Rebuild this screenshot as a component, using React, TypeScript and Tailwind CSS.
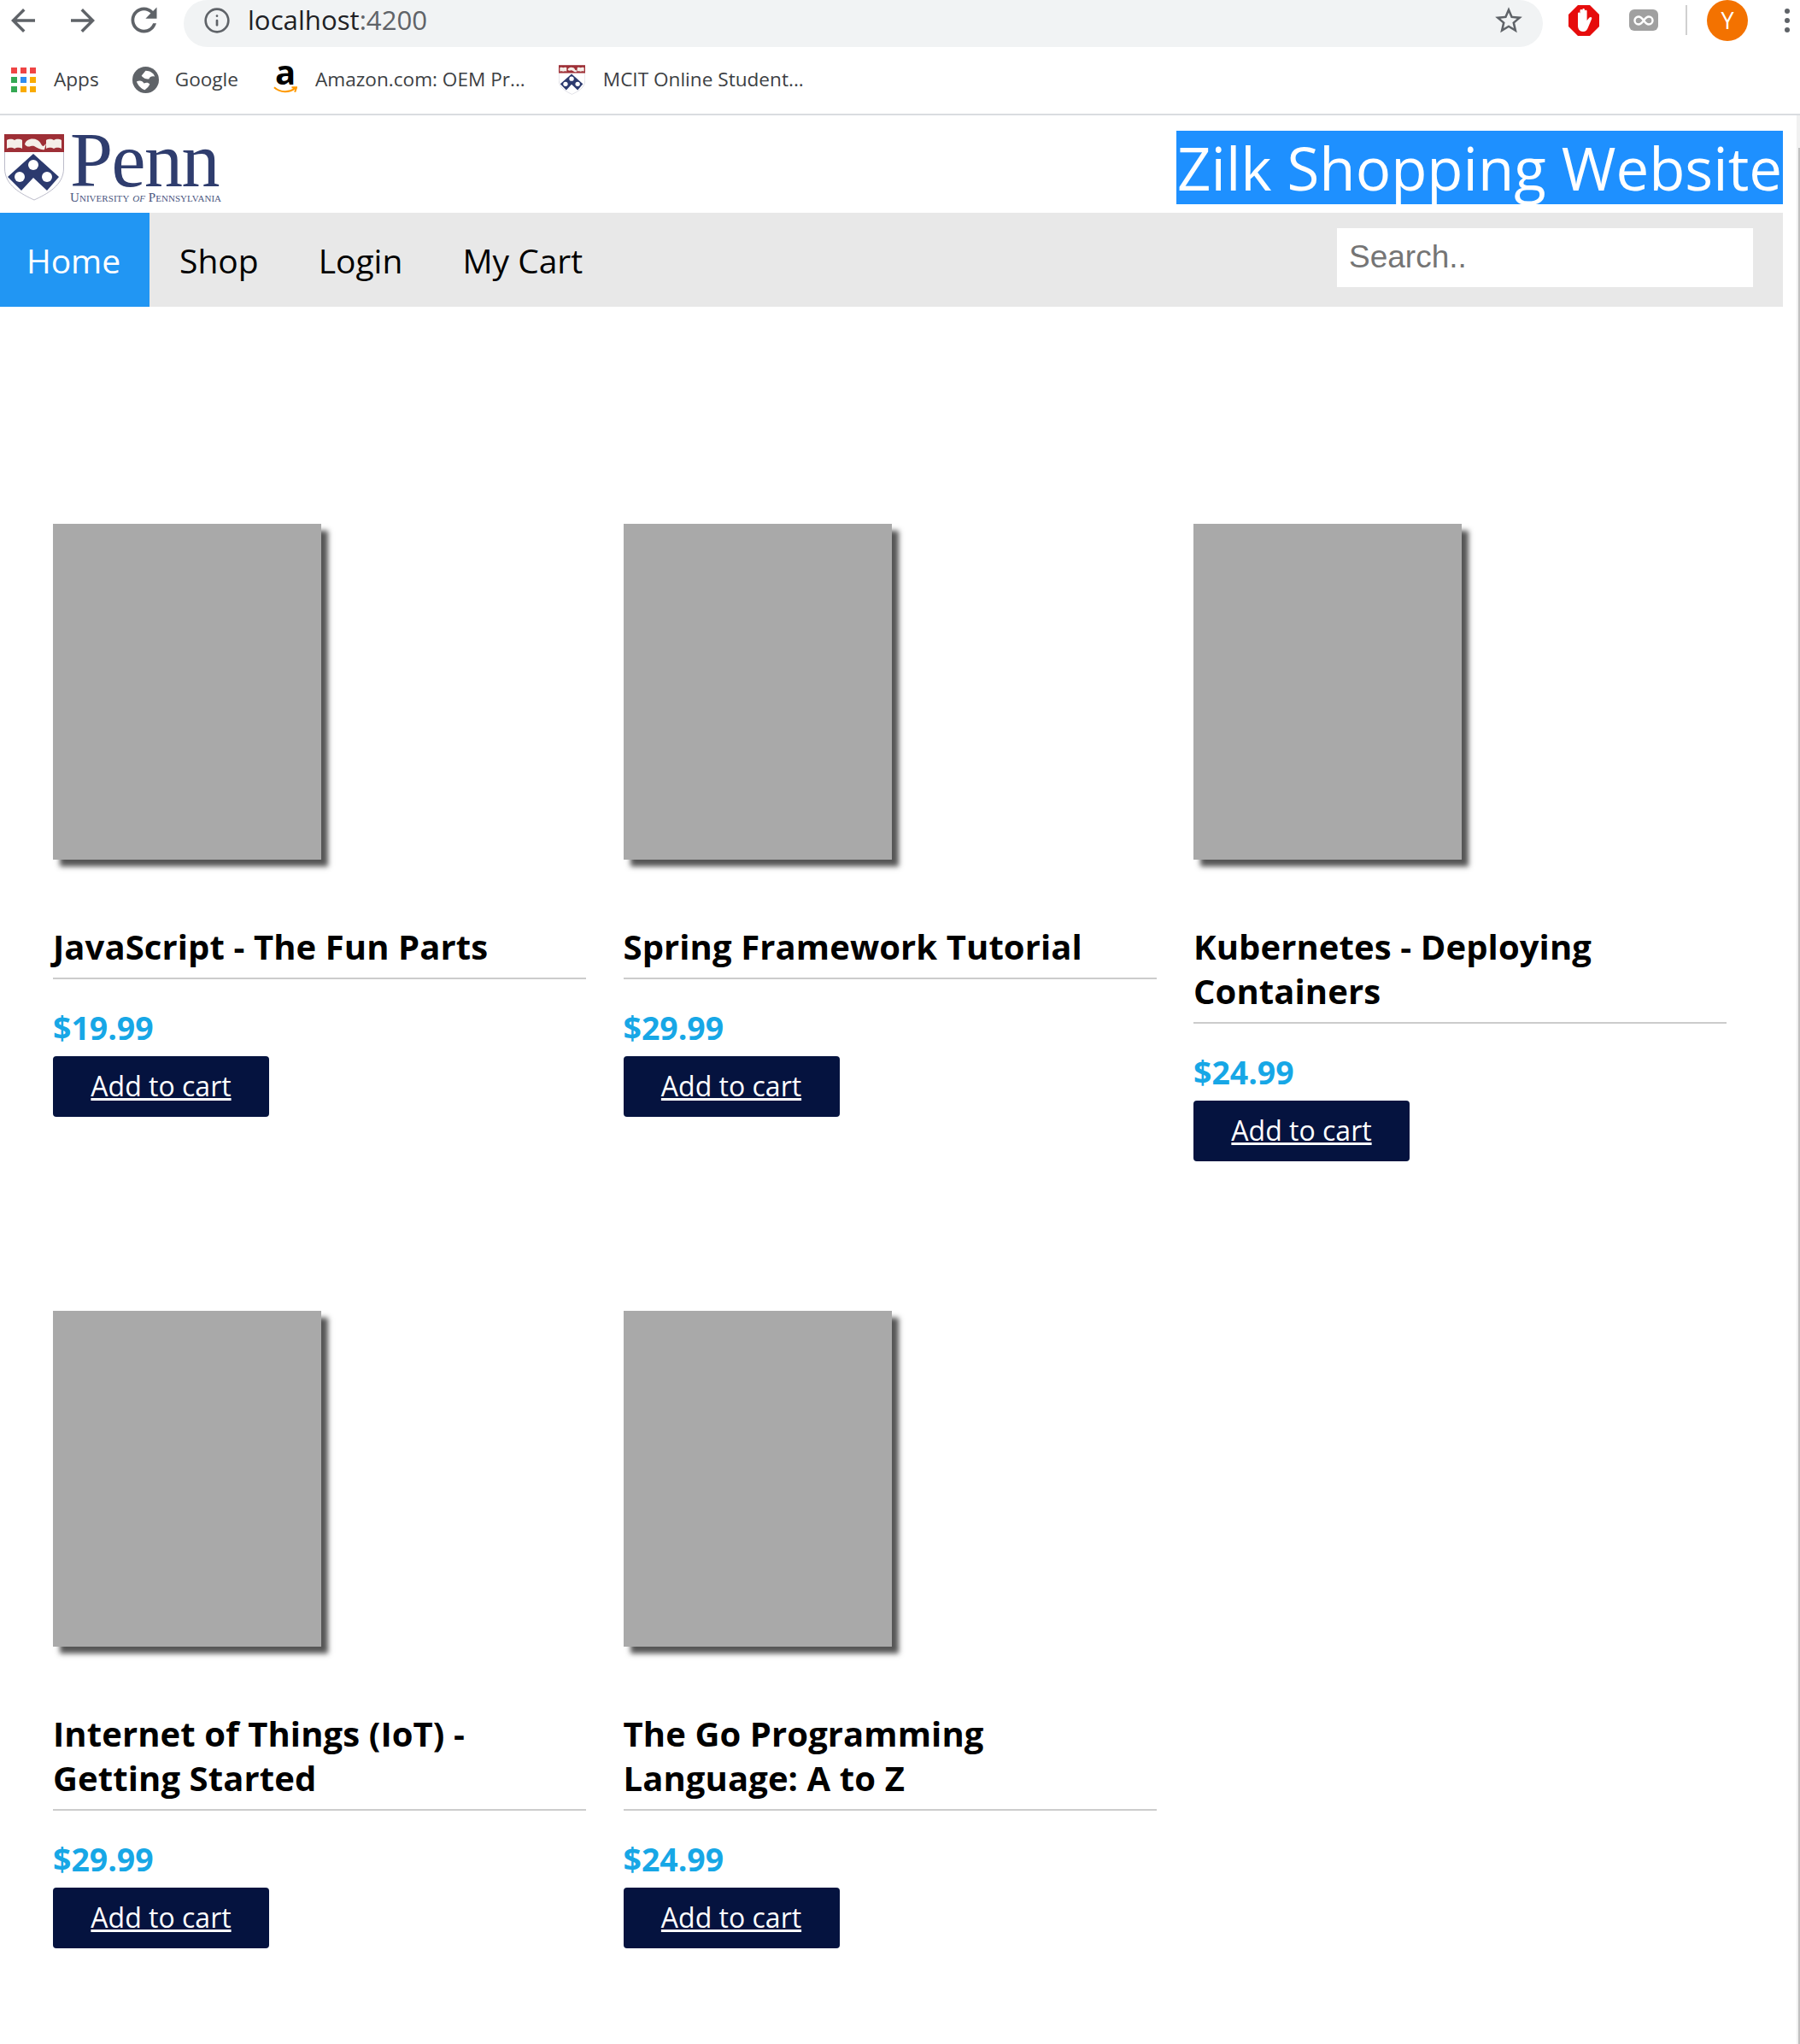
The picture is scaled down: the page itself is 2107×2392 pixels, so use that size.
import { Info } from "lucide-react";

type Product = { title: string[]; price: string };

const row1: Product[] = [
  { title: ["JavaScript - The Fun Parts"], price: "$19.99" },
  { title: ["Spring Framework Tutorial"], price: "$29.99" },
  { title: ["Kubernetes - Deploying", "Containers"], price: "$24.99" },
];

const row2: Product[] = [
  { title: ["Internet of Things (IoT) -", "Getting Started"], price: "$29.99" },
  { title: ["The Go Programming", "Language: A to Z"], price: "$24.99" },
];

const segoe = "font-['Open_Sans','Noto_Sans',sans-serif]";

// Penn shield, used big in the header and small in the bookmarks bar
function Shield({ className }: { className: string }) {
  return (
    <svg className={className} viewBox="0 0 70 78" aria-hidden="true">
      <path d="M0.5 0.5H69.5V40C69.5 60 50 70 35 77C20 70 0.5 60 0.5 40Z" fill="#fff" stroke="#aab" strokeWidth="0.8" />
      <path d="M0 0H70V21H0Z" fill="#9e2f36" />
      <path d="M3 7C7 5 10 6 12 7C14 6 17 5 21 7V17C17 15 14 16 12 17C10 16 7 15 3 17Z" fill="#f4eee8" />
      <path d="M49 7C53 5 56 6 58 7C60 6 63 5 67 7V17C63 15 60 16 58 17C56 16 53 15 49 17Z" fill="#f4eee8" />
      <path d="M24 12C25 6 33 4 39 7C43 9 43 14 46 14L49 11L47 18C43 19 39 16 35 14C31 13 28 17 24 12Z" fill="#f4eee8" />
      <path d="M34 23L64 50L50 66L34 51L20 66L4 50Z" fill="#2c3a6e" />
      <circle cx="34" cy="36" r="6" fill="#fff" />
      <circle cx="18" cy="50" r="6" fill="#fff" />
      <circle cx="50" cy="50" r="6" fill="#fff" />
    </svg>
  );
}

function ChromeIcon({ d, className }: { d: string; className: string }) {
  return (
    <svg className={className} viewBox="0 0 24 24" fill="#5f6368" aria-hidden="true">
      <path d={d} />
    </svg>
  );
}

function AppsGrid() {
  const colors = ["#ef4444", "#ef4444", "#ef4444", "#34a853", "#2f8cf0", "#f9ab00", "#34a853", "#f9ab00", "#f9ab00"];
  return (
    <div className="grid h-[29px] w-[29px] grid-cols-3 gap-[4px]">
      {colors.map((c, i) => (
        <span key={i} className="block" style={{ backgroundColor: c }} />
      ))}
    </div>
  );
}

function Bookmark({ icon, label, gap = "gap-[21px]" }: { icon: React.ReactNode; label: string; gap?: string }) {
  return (
    <div className={`flex items-center ${gap}`}>
      {icon}
      <span className="text-[22.6px] leading-none text-[#3c4043]">{label}</span>
    </div>
  );
}

function ProductCard({ product }: { product: Product }) {
  return (
    <div>
      <div className="h-[393px] w-[314px] bg-[#a9a9a9] shadow-[8px_8px_6px_#555]" />
      <h3 className="mt-[76px] border-b-2 border-[#ccc] pb-[10px] text-[40px] font-bold leading-[52px] tracking-[0.1px] text-black">
        {product.title.map((line) => (
          <div key={line}>{line}</div>
        ))}
      </h3>
      <p className="mt-[31px] text-[37.4px] font-bold leading-[52px] text-[#17a7e6]">{product.price}</p>
      <button className="mt-[7px] flex h-[71px] w-[253px] items-center justify-center rounded-[4px] bg-[#05133f] pb-[1px] text-[32px] text-white underline">
        Add to cart
      </button>
    </div>
  );
}

export default function App() {
  return (
    <div className={`h-[2392px] w-[2107px] overflow-hidden bg-white ${segoe}`}>
      {/* Browser chrome */}
      <div className="flex h-[55px] items-center pb-[8px] pl-[6px]">
        <ChromeIcon className="h-[42px] w-[42px]" d="M20 11H7.83l5.59-5.59L12 4l-8 8 8 8 1.41-1.41L7.83 13H20v-2z" />
        <ChromeIcon className="ml-[28px] h-[42px] w-[42px]" d="M4 11h12.17l-5.59-5.59L12 4l8 8-8 8-1.41-1.41L16.17 13H4v-2z" />
        <ChromeIcon
          className="ml-[28px] h-[45px] w-[45px]"
          d="M17.65 6.35C16.2 4.9 14.21 4 12 4c-4.42 0-7.99 3.58-7.99 8s3.57 8 7.99 8c3.73 0 6.84-2.55 7.73-6h-2.08c-.82 2.33-3.04 4-5.65 4-3.31 0-6-2.69-6-6s2.69-6 6-6c1.66 0 3.14.69 4.22 1.78L13 11h7V4l-2.35 2.35z"
        />
        <div className="ml-[24px] flex h-[55px] w-[1591px] items-center self-start rounded-[28px] bg-[#f1f3f4] pb-[8px] pl-[23px] pr-[21px]">
          <Info className="h-[32px] w-[32px] text-[#5f6368]" strokeWidth={2} />
          <span className="ml-[20px] text-[31.2px] leading-none text-[#202124]">
            localhost<span className="text-[#5f6368]">:4200</span>
          </span>
          <ChromeIcon
            className="ml-auto h-[38px] w-[38px]"
            d="M22 9.24l-7.19-.62L12 2 9.19 8.63 2 9.24l5.46 4.73L5.82 21 12 17.27 18.18 21l-1.63-7.03L22 9.24zM12 15.4l-3.76 2.27 1-4.28-3.32-2.88 4.38-.38L12 6.1l1.71 4.04 4.38.38-3.32 2.88 1 4.28L12 15.4z"
          />
        </div>
        <svg className="ml-[30px] h-[36px] w-[36px]" viewBox="0 0 36 36" aria-hidden="true">
          <path d="M11 0H25L36 11V25L25 36H11L0 25V11Z" fill="#e60c0c" />
          <path d="M11 18V10C11 8 13.5 8 13.5 10V6.5C13.5 4.5 16.2 4.5 16.2 6.5V5.5C16.2 3.5 19 3.5 19 5.5V7C19 5.2 21.6 5.2 21.6 7V18L24.5 14.5C26.5 13 28 14.5 27 16.5L23 26C22 29 20 31 17 31C13 31 11 28 11 24Z" fill="#fff" />
        </svg>
        <div className="ml-[35px] flex h-[25px] w-[34px] items-center justify-center rounded-[6px] bg-[#a0a0a0]">
          <svg className="h-[12px] w-[24px]" viewBox="0 0 24 12" fill="none" stroke="#fff" strokeWidth="2.4" aria-hidden="true">
            <path d="M12 6C9.5 2.5 8 1.5 6 1.5C3.5 1.5 1.5 3.5 1.5 6C1.5 8.5 3.5 10.5 6 10.5C8 10.5 9.5 9.5 12 6C14.5 2.5 16 1.5 18 1.5C20.5 1.5 22.5 3.5 22.5 6C22.5 8.5 20.5 10.5 18 10.5C16 10.5 14.5 9.5 12 6Z" />
          </svg>
        </div>
        <div className="ml-[32px] h-[35px] w-[2px] bg-[#d0d0d0]" />
        <div className="ml-[23px] flex h-[48px] w-[48px] items-center justify-center rounded-full bg-[#f37200] text-[27px] leading-none text-white">
          Y
        </div>
        <div className="ml-[43px] flex flex-col gap-[5px]">
          <span className="h-[6px] w-[6px] rounded-full bg-[#5f6368]" />
          <span className="h-[6px] w-[6px] rounded-full bg-[#5f6368]" />
          <span className="h-[6px] w-[6px] rounded-full bg-[#5f6368]" />
        </div>
      </div>

      {/* Bookmarks bar */}
      <div className="flex h-[80px] items-center border-b-2 border-[#dadce0] pb-[1px] pl-[13px]">
        <Bookmark icon={<AppsGrid />} label="Apps" />
        <div className="ml-[39px]">
          <Bookmark
            gap="gap-[19px]"
            label="Google"
            icon={
              <svg className="h-[31px] w-[31px]" viewBox="0 0 32 32" aria-hidden="true">
                <circle cx="16" cy="16" r="16" fill="#5f6368" />
                <path d="M16 5C21 5 26 8 27 12C24 11 21 12 20 15C15 15 13 13 11 11C13 9 14 7 16 5ZM5 18C9 16 12 17 14 20C17 19 19 19 21 21C20 24 18 26 15 28C11 27 7 23 5 18Z" fill="#fff" />
              </svg>
            }
          />
        </div>
        <div className="ml-[41px]">
          <Bookmark
            label="Amazon.com: OEM Pr..."
            icon={
              <span className="relative flex h-[32px] w-[28px] justify-center">
                <span className="text-[40px] font-bold leading-[12px] text-black">a</span>
                <svg className="absolute bottom-0 left-0 h-[10px] w-[28px]" viewBox="0 0 30 10" aria-hidden="true">
                  <path d="M1 2C9 9 20 9 27 3M23 2L29 2L27 8" fill="none" stroke="#f90" strokeWidth="2.2" />
                </svg>
              </span>
            }
          />
        </div>
        <div className="ml-[39px]">
          <Bookmark label="MCIT Online Student..." icon={<Shield className="h-[35px] w-[31px]" />} />
        </div>
      </div>

      <div className="flex">
        <div className="w-[2103px]">
          {/* Site header */}
          <div className="w-[2087px]">
            <div className="flex h-[114px] items-start justify-between">
              <div className="ml-[5px] mt-[22px] flex">
                <Shield className="h-[78px] w-[70px]" />
                <div className="ml-[7px] flex flex-col">
                  <span className="font-['Liberation_Serif',serif] text-[90px] leading-[62px] tracking-[-1.5px] text-[#2f3d6e]">
                    Penn
                  </span>
                  <span className="mt-[5px] whitespace-nowrap font-['Liberation_Serif',serif] text-[15px] leading-[14px] tracking-[0.05px] text-[#4a5680] [font-variant:small-caps]">
                    University <i>of</i> Pennsylvania
                  </span>
                </div>
              </div>
              <div className="mt-[18px] flex h-[86px] w-[710px] items-center justify-center whitespace-nowrap bg-[#1e90ff] text-[69px] leading-none text-white">
                Zilk Shopping Website
              </div>
            </div>

            {/* Nav */}
            <nav className="flex h-[110px] items-stretch bg-[#e8e8e8] text-[39px] text-black">
              <a className="flex w-[175px] items-center justify-center bg-[#2196f3] pr-[3px] pt-[2px] text-white">Home</a>
              <a className="ml-[35px] flex items-center pt-[2px]">Shop</a>
              <a className="ml-[70px] flex items-center pt-[2px]">Login</a>
              <a className="ml-[70px] flex items-center pt-[2px]">My Cart</a>
              <div className="ml-auto mr-[35px] flex items-start pt-[18px]">
                <div className="flex h-[69px] w-[487px] items-center bg-white pb-[2px] pl-[14px] font-['Liberation_Sans',sans-serif] text-[37px] text-[#757575]">
                  Search..
                </div>
              </div>
            </nav>
          </div>

          {/* Products */}
          <main className="pl-[62px] pt-[254px]">
            <div className="grid w-[1960px] grid-cols-[624px_624px_624px] items-start gap-x-[43.5px]">
              {row1.map((p) => (
                <ProductCard key={p.title[0]} product={p} />
              ))}
            </div>
            <div className="mt-[175px] grid w-[1960px] grid-cols-[624px_624px_624px] items-start gap-x-[43.5px]">
              {row2.map((p) => (
                <ProductCard key={p.title[0]} product={p} />
              ))}
            </div>
          </main>
        </div>

        {/* Window scrollbar strip */}
        <div className="h-[2257px] w-[4px] bg-[#f1f1f1]">
          <div className="ml-[2px] mt-[38px] h-[2219px] w-[2px] bg-[#c1c1c1]" />
        </div>
      </div>
    </div>
  );
}
